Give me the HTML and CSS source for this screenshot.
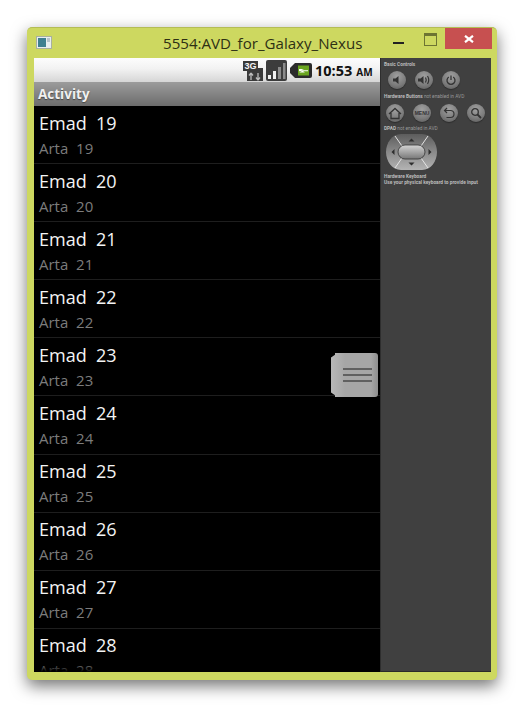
FILE: index.html
```html
<!DOCTYPE html>
<html lang="en">
  <head>
    <meta charset="UTF-8" />
    <meta name="viewport" content="width=device-width, initial-scale=1.0" />
    <title>5554:AVD_for_Galaxy_Nexus</title>
    <link rel="stylesheet" href="styles.css">
  </head>
  <body>
    <div class="window">
      <div class="titlebar">
        <svg class="app-icon" width="16" height="13" viewBox="0 0 16 13">
          <rect x="0.5" y="0.5" width="15" height="12" fill="#e8eef0" stroke="#a8b0a0" />
          <rect x="2" y="2" width="8" height="9" fill="#3f8090" />
          <rect x="11" y="2" width="3" height="4" fill="#b8c4cc" />
        </svg>
        <div class="title">5554:AVD_for_Galaxy_Nexus</div>
        <div class="win-controls">
          <div class="win-min"></div>
          <div class="win-max"></div>
          <div class="win-close">
            <svg width="10" height="8" viewBox="0 0 10 8">
              <path d="M1 0.8 L9 7.2 M9 0.8 L1 7.2" stroke="#fff" stroke-width="2.2" />
            </svg>
          </div>
        </div>
      </div>

      <div class="client">
        <div class="phone">
          <div class="statusbar">
            <svg width="20" height="21" viewBox="0 0 20 21">
              <path d="M0 1 H15 V8 H20 V21 H4 V11 H0 Z" fill="#3a3a3a" />
              <text x="7.500" y="9" class="icon-text">3G</text>
              <path d="M8 13 V20 M8 13 L6 15.500 M8 13 L10 15.500 M15 13 V20 M15 20 L13 17.500 M15 20 L17 17.500" stroke="#bbb" stroke-width="1.300" fill="none" />
            </svg>
            <svg class="signal" width="21" height="21" viewBox="0 0 21 21">
              <rect width="21" height="21" rx="2" fill="#3c3c3c" />
              <path d="M2 19 h3 v-4 h-3z M7 19 h3 v-8 h-3z" fill="#f0f0f0" />
              <path d="M12 19 h3 v-12 h-3z M17 19 h2.500 v-16 h-2.500z" fill="#8a8a8a" />
            </svg>
            <svg class="battery" width="22" height="15" viewBox="0 0 22 15">
              <path d="M5 0 H20 a2 2 0 0 1 2 2 V13 a2 2 0 0 1 -2 2 H5 L0 10 V5 Z" fill="#2b2b2b" />
              <rect x="8" y="2.500" width="11" height="10" fill="#6aa51f" />
              <path d="M9 6 H14 L11 7.200 H18 V8.200 H13 L15 9.500 H9 L12 8.200 H9 Z" fill="#fff" />
            </svg>
            <div class="clock">10:53<span class="ampm">AM</span></div>
          </div>
          <div class="actionbar">Activity</div>
          <div class="list">
            <div class="row"><div class="row-name">Emad  19</div><div class="row-sub">Arta  19</div></div>
            <div class="row"><div class="row-name">Emad  20</div><div class="row-sub">Arta  20</div></div>
            <div class="row"><div class="row-name">Emad  21</div><div class="row-sub">Arta  21</div></div>
            <div class="row"><div class="row-name">Emad  22</div><div class="row-sub">Arta  22</div></div>
            <div class="row"><div class="row-name">Emad  23</div><div class="row-sub">Arta  23</div></div>
            <div class="row"><div class="row-name">Emad  24</div><div class="row-sub">Arta  24</div></div>
            <div class="row"><div class="row-name">Emad  25</div><div class="row-sub">Arta  25</div></div>
            <div class="row"><div class="row-name">Emad  26</div><div class="row-sub">Arta  26</div></div>
            <div class="row"><div class="row-name">Emad  27</div><div class="row-sub">Arta  27</div></div>
            <div class="row"><div class="row-name">Emad  28</div><div class="row-sub">Arta  28</div></div>
          </div>
          <!-- drawer handle sits over the list -->
          <div class="handle">
            <span></span>
            <span></span>
            <span></span>
          </div>
        </div>

        <div class="panel">
          <p class="label"><b>Basic Controls</b></p>
          <div class="btn-row basic">
            <div class="hw-btn">
              <svg width="12" height="12" viewBox="0 0 12 12"><path d="M2 4.500 H4.500 L7.500 2 V10 L4.500 7.500 H2 Z" fill="#333" /></svg>
            </div>
            <div class="hw-btn">
              <svg width="14" height="12" viewBox="0 0 14 12"><path d="M1 4.500 H3.500 L6.500 2 V10 L3.500 7.500 H1 Z" fill="#333" /><path d="M8.500 3.500 Q10 6 8.500 8.500 M10.500 2 Q13 6 10.500 10" fill="none" stroke="#333" stroke-width="1.200" /></svg>
            </div>
            <div class="hw-btn">
              <svg width="12" height="12" viewBox="0 0 12 12"><path d="M3.800 3 A4 4 0 1 0 8.200 3" fill="none" stroke="#333" stroke-width="1.300" /><path d="M6 1.500 V6" stroke="#333" stroke-width="1.300" /></svg>
            </div>
          </div>
          <p class="label hardware"><b>Hardware Buttons</b> not enabled in AVD</p>
          <div class="btn-row hardware-row">
            <div class="hw-btn">
              <svg width="14" height="13" viewBox="0 0 14 13"><path d="M1 7 L7 1.500 L13 7 M3 6 V11.500 H11 V6" fill="none" stroke="#333" stroke-width="1.300" /></svg>
            </div>
            <div class="hw-btn menu-text">MENU</div>
            <div class="hw-btn">
              <svg width="12" height="12" viewBox="0 0 12 12"><path d="M4 1 L1.500 3.500 L4 6 M2 3.500 H7.500 A3.500 3.500 0 0 1 7.500 10.500 H3.500" fill="none" stroke="#333" stroke-width="1.200" /></svg>
            </div>
            <div class="hw-btn">
              <svg width="12" height="12" viewBox="0 0 12 12"><circle cx="5" cy="5" r="3.300" fill="none" stroke="#333" stroke-width="1.300" /><path d="M7.500 7.500 L11 11" stroke="#333" stroke-width="1.800" /></svg>
            </div>
          </div>
          <p class="label dpad-label"><b>DPAD</b> not enabled in AVD</p>
          <svg class="dpad" width="51" height="36" viewBox="0 0 51 36">
            <defs>
              <linearGradient id="dpadFill" x1="0" y1="0" x2="0" y2="1">
                <stop offset="0" stop-color="#5c5c5c" />
                <stop offset="0.500" stop-color="#8a8a8a" />
                <stop offset="1" stop-color="#b4b4b4" />
              </linearGradient>
              <linearGradient id="dpadMid" x1="0" y1="0" x2="0" y2="1">
                <stop offset="0" stop-color="#d4d4d4" />
                <stop offset="1" stop-color="#777" />
              </linearGradient>
            </defs>
            <path d="M15 0 H36 C45 0 51 9 51 18 C51 27 45 36 36 36 H15 C6 36 0 27 0 18 C0 9 6 0 15 0 Z" fill="url(#dpadFill)" />
            <path d="M9 2 L16 12 M42 2 L35 12 M9 34 L16 24 M42 34 L35 24" stroke="#e4e4e4" stroke-width="1" />
            <rect x="12" y="11" width="27" height="14" rx="7" fill="url(#dpadMid)" stroke="#333" stroke-width="0.800" />
            <path d="M25.500 4.500 L28.500 7.500 H22.500 Z M25.500 31.500 L28.500 28.500 H22.500 Z M5.500 18 L8.500 15 V21 Z M45.500 18 L42.500 15 V21 Z" fill="#2e2e2e" />
          </svg>
          <p class="label keyboard"><b>Hardware Keyboard</b><br /><b>Use your physical keyboard to provide input</b></p>
        </div>
      </div>
    </div>
  </body>
</html>
```

FILE: styles.css
```css
html,
body {
  margin: 0;
  height: 100%;
  background-color: #fff;
}
body {
  padding: 27px 0 0 27px;
  box-sizing: border-box;
  overflow: hidden;
}
.window {
  width: 470px;
  height: 653px;
  box-sizing: border-box;
  padding: 0 6px 8px 7px;
  display: flex;
  flex-direction: column;
  background-color: #cdd860;
  border-radius: 5px;
  border-top: 1px solid #b4bd55;
  box-shadow: 0 6px 16px rgba(0, 0, 0, 0.55);
}
.titlebar {
  height: 30px;
  flex: none;
  display: flex;
  align-items: flex-start;
}
.app-icon {
  margin: 8px 0 0 2px;
  flex: none;
}
.title {
  margin: 5px 0 0 111px;
  font-family: "Open Sans", "Noto Sans", sans-serif;
  font-size: 15.100px;
  line-height: 20px;
  color: #2e3014;
  white-space: nowrap;
}
.win-controls {
  margin-left: auto;
  display: flex;
  margin-right: -1px;
}
.win-min {
  width: 11px;
  height: 2px;
  margin: 14px 0 0 0;
  background-color: #222;
}
.win-max {
  width: 11px;
  height: 9px;
  margin: 5px 0 0 20px;
  border: 1px solid #6d7432;
  border-top-width: 3px;
}
.win-close {
  width: 47px;
  height: 21px;
  margin: 0 0 0 8px;
  display: flex;
  align-items: center;
  justify-content: center;
  background-color: #c75050;
}
.client {
  flex: 1;
  display: flex;
  min-height: 0;
}

/* phone screen */
.phone {
  position: relative;
  width: 346px;
  flex: none;
  display: flex;
  flex-direction: column;
  background-color: #000;
}
.statusbar {
  height: 24px;
  flex: none;
  box-sizing: border-box;
  padding-left: 209px;
  display: flex;
  align-items: center;
  background: linear-gradient(#fdfdfd, #f2f2f2 45%, #d6d6d6);
}
.icon-text {
  font-family: "Liberation Sans", sans-serif;
  font-size: 9px;
  font-weight: bold;
  fill: #f4f4f4;
  text-anchor: middle;
}
.signal {
  margin-left: 3px;
}
.battery {
  margin-left: 3px;
}
.clock {
  margin-left: 3px;
  font-family: "Open Sans", "Noto Sans", sans-serif;
  font-size: 14.500px;
  font-weight: bold;
  color: #111;
  white-space: nowrap;
}
.ampm {
  margin-left: 4px;
  font-size: 10px;
}
.actionbar {
  height: 24px;
  flex: none;
  box-sizing: border-box;
  padding-left: 4px;
  font-family: "Open Sans", "Noto Sans", sans-serif;
  font-size: 13.500px;
  font-weight: bold;
  line-height: 24px;
  color: #f0f0f0;
  text-shadow: 0 1px 1px #444;
  background: linear-gradient(#9c9c9c, #6c6c6c);
}
.list {
  flex: 1;
  min-height: 0;
  overflow: hidden;
  position: relative;
}
.list::after {
  content: "";
  position: absolute;
  left: 0;
  right: 0;
  bottom: 0;
  height: 8px;
  background: linear-gradient(rgba(0, 0, 0, 0), #000);
}
.row {
  height: 58.100px;
  box-sizing: border-box;
  padding: 3.600px 0 0 5px;
  border-bottom: 1px solid #1e1e1e;
  font-family: "Open Sans", "Noto Sans", sans-serif;
  white-space: pre;
}
.row-name {
  font-size: 18px;
  line-height: 26px;
  color: #f4f4f4;
}
.row-sub {
  font-size: 15px;
  line-height: 24px;
  color: #7c7c7c;
}
.handle {
  position: absolute;
  left: 297px;
  top: 295px;
  width: 47px;
  height: 44px;
  box-sizing: border-box;
  padding-left: 12px;
  display: flex;
  flex-direction: column;
  justify-content: center;
  gap: 4px;
  background: linear-gradient(90deg, #b8b8b8, #a6a6a6 30%, #a6a6a6 85%, #8e8e8e);
  border-radius: 4px 3px 3px 4px;
  clip-path: polygon(4px 0, 100% 0, 100% 100%, 4px 100%, 4px 96%, 0 90%, 0 10%, 4px 4%);
}
.handle span {
  display: block;
  width: 29px;
  height: 2px;
  background-color: #606060;
}

/* emulator controls */
.panel {
  flex: 1;
  box-sizing: border-box;
  padding: 4px 0 0 3px;
  background-color: #404040;
  border-bottom: 1px solid #2a2a2a;
  border-left: 1px solid #2e2e2e;
}
.label {
  margin: 0;
  font-family: "Roboto", "Liberation Sans", sans-serif;
  font-size: 4.800px;
  line-height: 6px;
  color: #999;
  white-space: nowrap;
}
.label b {
  color: #bbb;
}
.btn-row {
  display: flex;
  gap: 9px;
}
.basic {
  margin: 3px 0 0 4px;
}
.hardware {
  margin-top: 5px;
}
.hardware-row {
  margin: 4px 0 0 2px;
}
.dpad-label {
  margin-top: 4px;
}
.dpad {
  display: block;
  margin: 2px 0 0 2px;
}
.keyboard {
  margin-top: 4px;
}
.hw-btn {
  width: 18px;
  height: 18px;
  display: flex;
  align-items: center;
  justify-content: center;
  border-radius: 50%;
  background: radial-gradient(circle at 50% 30%, #a0a0a0, #7a7a7a 60%, #545454);
  box-shadow: 0 1px 1px #2c2c2c;
}
.menu-text {
  font-family: "Liberation Sans", sans-serif;
  font-size: 5px;
  font-weight: bold;
  color: #333;
}
```
